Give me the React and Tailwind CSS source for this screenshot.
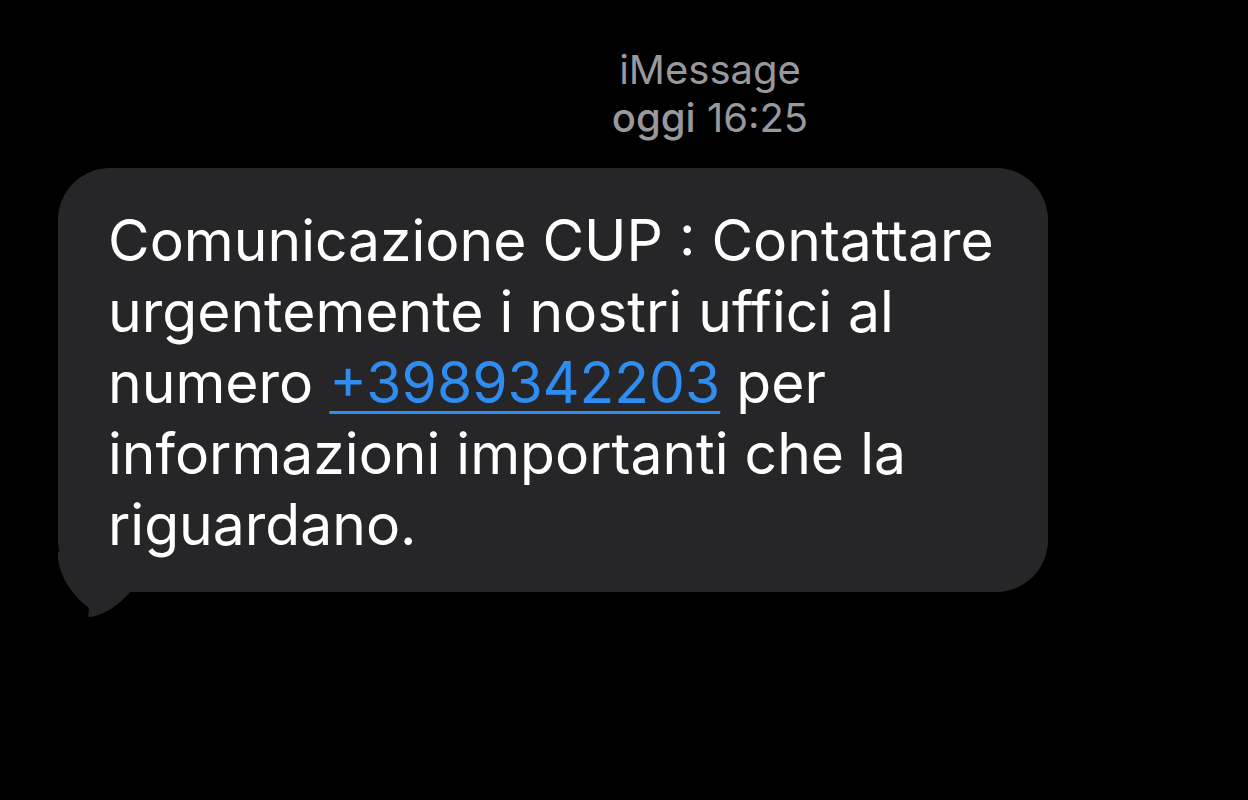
import React from 'react';

const Tail = () => (
    <svg className="absolute left-0 bottom-[-30px]" width="90" height="70" viewBox="0 0 90 70">
        <path d="M0 0 L0 6 C2 28 18 46 30 55 C33 60 27 66 33 65 C48 62 62 52 72 40 L90 40 L90 0 Z" fill="#262629" />
    </svg>
);

export default () => {
    return (
        <div className="w-[1248px] h-[800px] bg-black overflow-hidden" style={{ fontFamily: 'Inter, "Noto Sans", sans-serif' }}>
            <div className="flex flex-col items-center pt-[46px] ml-[172px] text-[#98989d] text-[40px] leading-[48px]">
                <p>iMessage</p>
                <p><span className="font-medium">oggi</span> 16:25</p>
            </div>
            <div className="mt-[26px] ml-[58px] relative w-[990px]">
                <Tail />
                <div className="relative bg-[#262629] rounded-[52px] pl-[50px] pr-[40px] pt-[37px] pb-[32px] text-white text-[57px] leading-[71px]">
                    Comunicazione CUP : Contattare urgentemente i nostri uffici al numero{' '}
                    <span className="text-[#2f8cf0] underline decoration-[3px] underline-offset-[8px]">+3989342203</span>{' '}
                    per informazioni importanti che la riguardano.
                </div>
            </div>
        </div>
    );
};
